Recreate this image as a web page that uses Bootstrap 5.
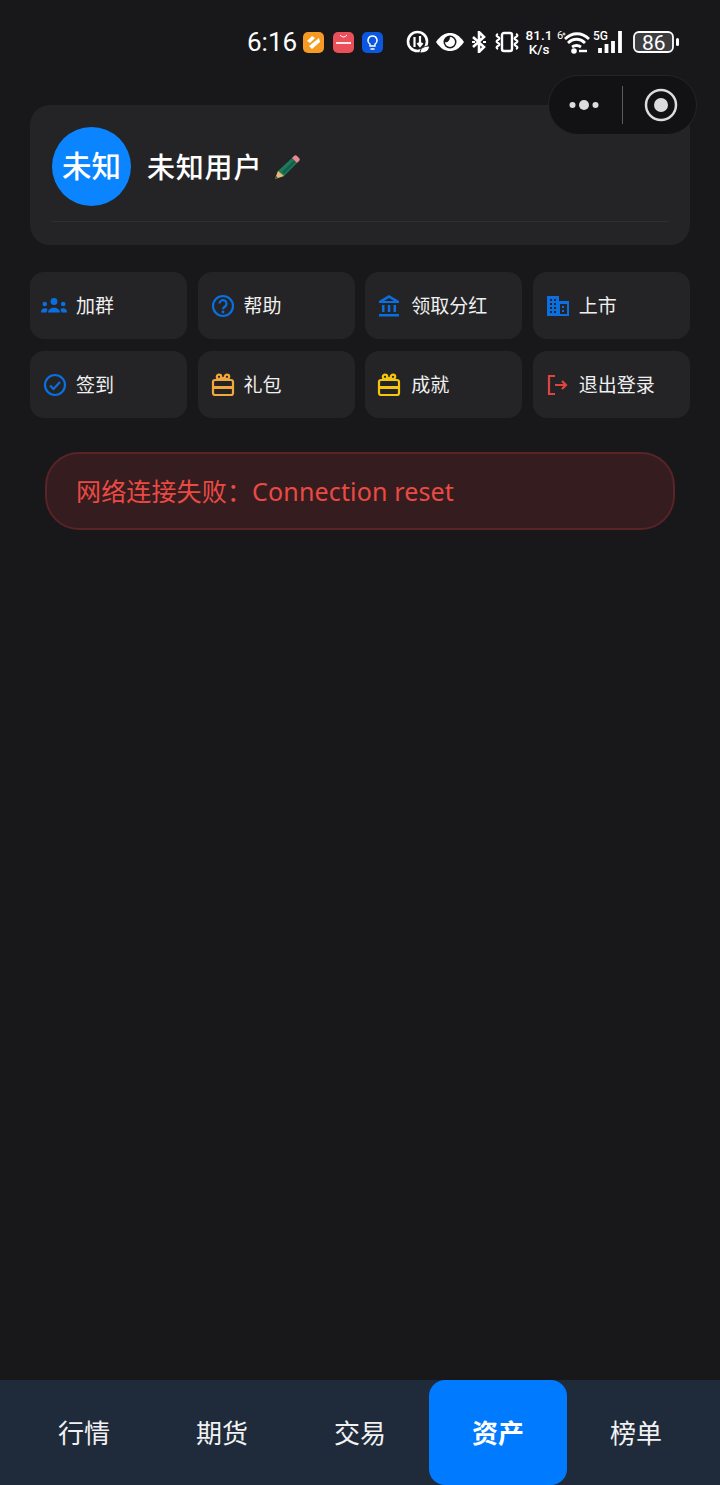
<!DOCTYPE html>
<html lang="zh-CN">
<head>
    <meta charset="UTF-8">
    <meta name="viewport" content="width=device-width, initial-scale=1.0">
    <title>资产</title>
    <link href="https://cdn.jsdelivr.net/npm/bootstrap@5.3.3/dist/css/bootstrap.min.css" rel="stylesheet">
    <style>
        html, body { background-color: #18181a; }
        body { font-family: "Noto Sans", "Noto Sans CJK SC", sans-serif; color: #f2f2f2; }
        .app-page { width: 720px; height: 1485px; overflow: hidden; }

        .status-bar { height: 30px; margin-top: 27px; padding-left: 247px; color: #fff; }
        .status-time { font-family: Roboto, sans-serif; font-size: 26px; line-height: 30px; width: 51px; }
        .status-app { width: 21px; height: 21px; margin-left: 8.5px; }
        .status-first { margin-left: 5px; }
        .status-ring { width: 24px; height: 24px; margin-left: 22.5px; }
        .status-eye { width: 30px; height: 20px; margin-left: 5px; }
        .status-bt { width: 16px; height: 22px; margin-left: 6px; }
        .status-vib { width: 26px; height: 22px; margin-left: 7px; }
        .status-speed { font-family: Roboto, sans-serif; font-size: 13.5px; line-height: 14px; width: 27px; margin-left: 6px; text-align: center; font-weight: 500; }
        .status-wifi { width: 33px; height: 24px; margin-left: 4px; }
        .status-signal { width: 33px; height: 24px; margin-left: 3px; }
        .status-battery { width: 46px; height: 22px; margin-left: 7px; }

        .capsule { position: absolute; left: 548px; top: 75px; width: 149px; height: 60px; border-radius: 30px; background: #121214; border: 1px solid #252527; z-index: 2; }
        .capsule-dots { width: 40px; height: 14px; margin-left: 19px; }
        .capsule-line { width: 1px; height: 38px; background: #5c5c5e; margin-left: 14px; }
        .capsule-ring { width: 34px; height: 34px; margin-left: 21px; }

        .user-card { margin: 48px 30px 0; height: 140px; padding: 22px 22px 0; background: #242426; border-radius: 20px; }
        .avatar { width: 79px; height: 79px; background: #0a84ff; color: #fff; font-size: 29.5px; font-weight: 500; }
        .user-name { font-size: 28px; font-weight: 500; letter-spacing: .8px; color: #fff; margin-left: 16px; }
        .user-pencil { width: 28px; height: 28px; margin-left: 11px; }
        .user-divider { height: 1px; background: #2f2f31; margin-top: 15px; }

        .action-grid { display: grid; grid-template-columns: repeat(4, 157px); column-gap: 10.6px; row-gap: 12px; margin: 27px 30px 0; }
        .action-item { height: 67px; padding-top: 1px; background: #242426; border-radius: 14px; font-size: 19px; color: #f0f0f0; }
        .action-icon { width: 24px; height: 24px; margin-left: 13px; margin-right: 9px; flex: none; }
        .action-icon-wide { width: 26px; margin-left: 11px; }
        .action-icon-flush { margin-left: 12px; margin-right: 10px; }

        .error-box { margin: 34px 45px 0; height: 78px; padding: 1px 0 0 29px; background: #351c1e; border: 2px solid #5a2427; border-radius: 34px; color: #ea4a44; font-size: 25px; letter-spacing: .15px; }

        .tab-bar { height: 105px; padding: 0 15px; background: #1f2b3b; }
        .tab-item { width: 138px; padding-top: 2px; font-size: 26px; color: #f2f2f2; }
        .tab-active { background: #007aff; color: #fff; font-weight: 700; border-radius: 16px; }
    </style>
</head>
<body class="m-0">
    <div class="app-page d-flex flex-column position-relative">

        <!-- Systemleiste -->
        <div class="status-bar d-flex align-items-center">
            <span class="status-time">6:16</span>
            <svg class="status-app status-first" viewBox="0 0 21 21"><rect width="21" height="21" rx="5" fill="#f59a23"/><path d="M4 9l5-5 3 2-5 5zM9 17l8-7-1-4-10 8z" fill="#fff"/></svg>
            <svg class="status-app" viewBox="0 0 21 21"><rect width="21" height="21" rx="5" fill="#e9505a"/><path d="M7 3q3.500 4 7 0" fill="none" stroke="#fff"/><rect x="3" y="10" width="15" height="2" fill="#fff" opacity=".85"/></svg>
            <svg class="status-app" viewBox="0 0 21 21"><rect width="21" height="21" rx="5" fill="#0b57e0"/><path d="M8 14v-2c-4-3-1.500-8 2.500-8s6.500 5 2.500 8v2zM8.500 17h4" fill="none" stroke="#fff" stroke-width="1.400"/></svg>

            <svg class="status-ring" viewBox="0 0 24 24"><circle cx="11.500" cy="11.500" r="9.500" fill="none" stroke="#fff" stroke-width="2.600"/><path d="M8.500 7v10M14 6v10M11.500 13l2.500 3 2.500-3" fill="none" stroke="#fff" stroke-width="2.200"/><path d="M14 23c0-5 4-7 9.500-7 0 5-4 7-9.500 7z" fill="#fff" stroke="#18181a"/></svg>
            <svg class="status-eye" viewBox="0 0 30 20"><path d="M1 10C6 3 10 1 15 1s9 2 14 9c-5 7-9 9-14 9S6 17 1 10z" fill="#fff"/><circle cx="15" cy="10" r="6.500" fill="#18181a"/><path d="M15 5a5 5 0 1 1-5 5c2 1 5-1 5-5z" fill="#fff"/></svg>
            <svg class="status-bt" viewBox="0 0 16 22"><path d="M2 6l11 10-5 5V1l5 5L2 16" fill="none" stroke="#fff" stroke-width="2.600"/><path d="M1 11h3M12 11h3" stroke="#fff" stroke-width="2"/></svg>
            <svg class="status-vib" viewBox="0 0 26 22"><rect x="8" y="2" width="10" height="18" rx="2" fill="none" stroke="#fff" stroke-width="2.400"/><path d="M4 3q-3 1.500 0 3t0 3 0 3 0 3 0 3M22 3q3 1.500 0 3t0 3 0 3 0 3 0 3" fill="none" stroke="#fff" stroke-width="2"/></svg>
            <span class="status-speed">81.1<br>K/s</span>
            <svg class="status-wifi" viewBox="0 0 33 24"><text x="0" y="9" font-size="11" fill="#fff" font-family="Roboto">6</text><path d="M6 6.500v-3M4.500 5h3" stroke="#fff" stroke-width="1" transform="translate(1 -1)"/><path d="M8 9C15 2 25 2 32 9M11 13c5-5 12-5 17 0M15 17c3-2 6-2 9 0" fill="none" stroke="#fff" stroke-width="2.800"/><circle cx="17" cy="21" r="2.800" fill="#fff"/><path d="M22 21h8" stroke="#fff" stroke-width="2.400"/></svg>
            <svg class="status-signal" viewBox="0 0 33 24"><text x="0" y="10" font-size="12" font-weight="500" fill="#fff" font-family="Roboto">5G</text><path d="M7 23v-5M13.500 23v-9M20 23V11M27 23V1" stroke="#fff" stroke-width="3.800"/></svg>
            <svg class="status-battery" viewBox="0 0 46 22"><rect x="1" y="1" width="39" height="20" rx="5" fill="#3d3d3f" stroke="#fff" stroke-width="1.800"/><rect x="43" y="7" width="3" height="8" rx="1.500" fill="#fff"/><text x="9" y="18.500" font-size="21" fill="#fff" font-family="Roboto">86</text></svg>
        </div>

        <!-- Kapsel oben rechts -->
        <div class="capsule d-flex align-items-center">
            <svg class="capsule-dots" viewBox="0 0 40 14"><circle cx="4.500" cy="7" r="3" fill="#dcdcdc"/><circle cx="16" cy="7" r="5" fill="#dcdcdc"/><circle cx="27.500" cy="7" r="3" fill="#dcdcdc"/></svg>
            <div class="capsule-line"></div>
            <svg class="capsule-ring" viewBox="0 0 34 34"><circle cx="17" cy="17" r="15" fill="none" stroke="#dcdcdc" stroke-width="2.500"/><circle cx="17" cy="17" r="7" fill="#dcdcdc"/></svg>
        </div>

        <!-- Benutzerkarte -->
        <div class="user-card">
            <div class="d-flex align-items-center">
                <div class="avatar rounded-circle d-flex align-items-center justify-content-center">未知</div>
                <span class="user-name">未知用户</span>
                <svg class="user-pencil" viewBox="0 0 28 28">
                    <path d="M2 26l3-8L19 5l5 5-13 13z" fill="#1f7a5c"/>
                    <path d="M9 19L21 7l2 2L11 21z" fill="#15604a"/>
                    <path d="M19 5l2-2c1-1 2-1 3 0l2 2c1 1 1 2 0 3l-2 2z" fill="#e58a90"/>
                    <path d="M2 26l3-8 6 5z" fill="#eab676"/>
                    <path d="M2 26l1-3 2 2z" fill="#444"/>
                </svg>
            </div>
            <div class="user-divider"></div>
        </div>

        <!-- Aktionen -->
        <div class="action-grid">
            <div class="action-item d-flex align-items-center">
                <svg class="action-icon action-icon-wide" viewBox="0 0 26 24"><g fill="#0a6fe0"><circle cx="13" cy="7.500" r="3.400"/><path d="M7 18.500c0-6.500 12-6.500 12 0z"/><circle cx="3.800" cy="10" r="2.300"/><path d="M0 18.500c0-5 5-5 6.500-3.500L5.500 18.500z"/><circle cx="22.200" cy="10" r="2.300"/><path d="M26 18.500c0-5-5-5-6.500-3.500l1 3.500z"/></g></svg>
                加群
            </div>
            <div class="action-item d-flex align-items-center">
                <svg class="action-icon" viewBox="0 0 24 24"><circle cx="12" cy="12" r="10" fill="none" stroke="#0a6fe0" stroke-width="2.200"/><path d="M8.500 9.500a3.500 3.500 0 1 1 5.500 3c-1.500 1-2 1.500-2 2.800" fill="none" stroke="#0a6fe0" stroke-width="2.200"/><circle cx="12" cy="18" r="1.400" fill="#0a6fe0"/></svg>
                帮助
            </div>
            <div class="action-item d-flex align-items-center">
                <svg class="action-icon action-icon-flush" viewBox="0 0 24 24"><g fill="#0a6fe0"><path d="M12 1L2 7v2h20V7zM12 4l5 3H7z"/><rect x="5" y="11" width="2.500" height="7"/><rect x="10.800" y="11" width="2.500" height="7"/><rect x="16.500" y="11" width="2.500" height="7"/><rect x="2" y="20" width="20" height="2.500"/></g></svg>
                领取分红
            </div>
            <div class="action-item d-flex align-items-center">
                <svg class="action-icon" viewBox="0 0 24 24"><path d="M1 2h12v5h10v15H1z" fill="#0a6fe0"/><g fill="#242426"><rect x="4" y="5" width="2" height="2"/><rect x="8" y="5" width="2" height="2"/><rect x="4" y="9" width="2" height="2"/><rect x="8" y="9" width="2" height="2"/><rect x="4" y="13" width="2" height="2"/><rect x="8" y="13" width="2" height="2"/><rect x="4" y="17" width="2" height="2"/><rect x="8" y="17" width="2" height="2"/><rect x="14" y="10" width="7" height="10"/></g><g fill="#0a6fe0"><rect x="16" y="12" width="2" height="2"/><rect x="16" y="16" width="2" height="2"/></g></svg>
                上市
            </div>
            <div class="action-item d-flex align-items-center">
                <svg class="action-icon" viewBox="0 0 24 24"><circle cx="12" cy="12" r="10" fill="none" stroke="#0a6fe0" stroke-width="2.200"/><path d="M7 12.500l3.500 3.500L17 9" fill="none" stroke="#0a6fe0" stroke-width="2.200"/></svg>
                签到
            </div>
            <div class="action-item d-flex align-items-center">
                <svg class="action-icon" viewBox="0 0 24 24"><g fill="none" stroke="#f2a83b" stroke-width="2.200"><rect x="2" y="7" width="20" height="15" rx="2"/><circle cx="8" cy="3.800" r="2.200"/><circle cx="16" cy="3.800" r="2.200"/><path d="M8 7l4-2 4 2"/></g><rect x="2" y="13" width="20" height="3" fill="#f2a83b"/></svg>
                礼包
            </div>
            <div class="action-item d-flex align-items-center">
                <svg class="action-icon action-icon-flush" viewBox="0 0 24 24"><g fill="none" stroke="#f5c60c" stroke-width="2.200"><rect x="2" y="7" width="20" height="15" rx="2"/><circle cx="8" cy="3.800" r="2.200"/><circle cx="16" cy="3.800" r="2.200"/><path d="M8 7l4-2 4 2"/></g><rect x="2" y="13" width="20" height="3" fill="#f5c60c"/></svg>
                成就
            </div>
            <div class="action-item d-flex align-items-center">
                <svg class="action-icon" viewBox="0 0 24 24"><path d="M9 3H3v18h6" fill="none" stroke="#e0443e" stroke-width="2.200"/><path d="M9 12h11M16 8l4 4-4 4" fill="none" stroke="#e0443e" stroke-width="2.200"/></svg>
                退出登录
            </div>
        </div>

        <!-- Fehlermeldung -->
        <div class="error-box d-flex align-items-center">网络连接失败：Connection reset</div>

        <!-- Untere Navigation -->
        <nav class="tab-bar d-flex mt-auto">
            <div class="tab-item d-flex align-items-center justify-content-center">行情</div>
            <div class="tab-item d-flex align-items-center justify-content-center">期货</div>
            <div class="tab-item d-flex align-items-center justify-content-center">交易</div>
            <div class="tab-item tab-active d-flex align-items-center justify-content-center">资产</div>
            <div class="tab-item d-flex align-items-center justify-content-center">榜单</div>
        </nav>
    </div>
    <script src="https://cdn.jsdelivr.net/npm/bootstrap@5.3.3/dist/js/bootstrap.bundle.min.js"></script>
</body>
</html>
